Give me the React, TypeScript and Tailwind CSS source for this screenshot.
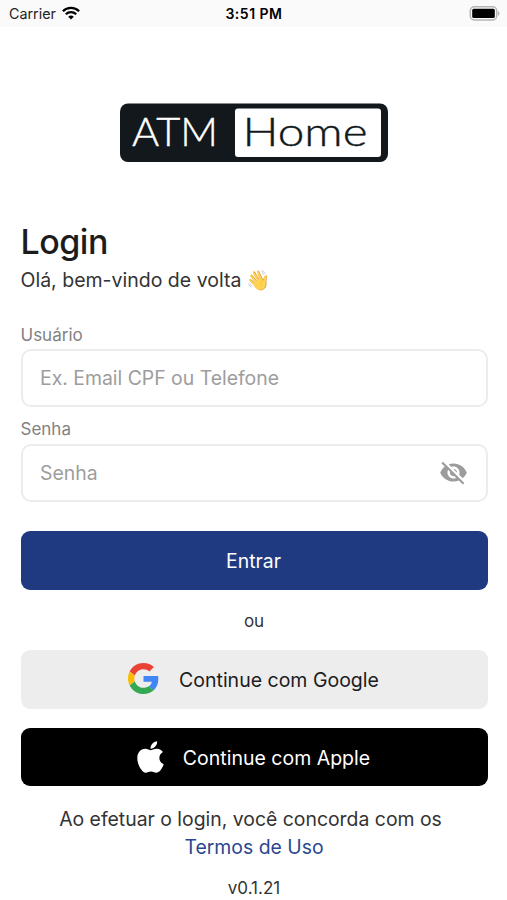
import { FaApple } from "react-icons/fa";
import { MdVisibilityOff } from "react-icons/md";

function StatusBar() {
    return (
        <div className="grid grid-cols-3 items-center h-[27px] pl-[9px] pr-[7px] bg-[#fafafa] text-black">
            <div className="flex items-center gap-[6px]">
                <span className="text-[14.3px] leading-[27px] text-[#222]">Carrier</span>
                <svg className="-mt-px" width="18" height="14" viewBox="0 0 18 14" fill="none" stroke="black" strokeWidth="2.3">
                    <path d="M0.9 5.2a11.5 11.5 0 0 1 16.2 0" />
                    <path d="M3.8 8.3a7.4 7.4 0 0 1 10.4 0" />
                    <path d="M9 13.6 6.2 10.8a4 4 0 0 1 5.6 0Z" fill="black" stroke="none" />
                </svg>
            </div>
            <span className="pr-px text-center text-[14px] leading-[27px] tracking-[0.5px] font-semibold">3:51 PM</span>
            <svg className="justify-self-end" width="31" height="15" viewBox="0 0 31 15">
                <rect x="1.3" y="0.8" width="26.4" height="13.2" rx="4" fill="#fafafa" stroke="#b5b5b5" strokeWidth="1.5" />
                <rect x="3.2" y="2.8" width="22.6" height="9.2" rx="1.5" fill="black" />
                <path d="M28.9 5v5q1.6-.8 1.6-2.5T28.9 5Z" fill="#b5b5b5" />
            </svg>
        </div>
    );
}

function Logo() {
    return (
        <svg className="mx-auto mt-[76px]" width="268" height="59" viewBox="0 0 268 59" fontFamily="Lato, sans-serif" fontWeight="300" fontSize="40">
            <rect y="0.5" width="268" height="58.5" rx="8" fill="#12181b" />
            <rect x="115" y="5.5" width="146" height="48.5" rx="3" fill="white" />
            <text x="12" y="43" fill="white" stroke="white" strokeWidth="0.4" textLength="86" lengthAdjust="spacingAndGlyphs">ATM</text>
            <text x="122.5" y="43" fill="#12181b" stroke="#12181b" strokeWidth="0.4" textLength="125" lengthAdjust="spacingAndGlyphs">Home</text>
        </svg>
    );
}

function GoogleIcon() {
    return (
        <svg className="-mt-[5px]" width="31" height="31" viewBox="0 0 48 48">
            <path fill="#EA4335" d="M24 9.5c3.54 0 6.71 1.22 9.21 3.6l6.85-6.85C35.9 2.38 30.47 0 24 0 14.62 0 6.51 5.38 2.56 13.22l7.98 6.19C12.43 13.72 17.74 9.5 24 9.5z" />
            <path fill="#4285F4" d="M46.98 24.55c0-1.57-.15-3.09-.38-4.55H24v9.02h12.94c-.58 2.96-2.26 5.48-4.78 7.18l7.73 6c4.51-4.18 7.09-10.36 7.09-17.65z" />
            <path fill="#FBBC05" d="M10.53 28.59c-.48-1.45-.76-2.99-.76-4.59s.27-3.14.76-4.59l-7.98-6.19C.92 16.46 0 20.12 0 24c0 3.88.92 7.54 2.56 10.78l7.97-6.19z" />
            <path fill="#34A853" d="M24 48c6.48 0 11.93-2.13 15.89-5.81l-7.73-6c-2.15 1.45-4.92 2.3-8.16 2.3-6.26 0-11.57-4.22-13.47-9.91l-7.98 6.19C6.51 42.62 14.62 48 24 48z" />
        </svg>
    );
}

export default function App() {
    return (
        <div className="h-[900px] overflow-hidden bg-white font-['Inter',sans-serif] text-[#333]">
            <StatusBar />
            <Logo />

            <main className="flex flex-col pl-[20.5px] pr-[19.5px]">
                <h1 className="mt-[59px] text-[34px] leading-[42px] tracking-[-0.5px] font-medium text-[#1c1c1c]">Login</h1>
                <p className="mt-[3px] text-[19.5px] leading-[28px]">
                    Olá, bem-vindo de volta <span className="-ml-px opacity-80">👋</span>
                </p>

                <label className="mt-[30px] text-[17px] leading-[22px] text-[#828282]">Usuário</label>
                <div className="mt-[3px] flex items-center h-[58px] px-[17.5px] rounded-[10px] border-2 border-[#ececec]">
                    <span className="pt-[2px] text-[19.4px] text-[#9d9d9d]">Ex. Email CPF ou Telefone</span>
                </div>

                <label className="mt-[10.5px] text-[17px] leading-[22px] text-[#828282]">Senha</label>
                <div className="mt-[4.5px] flex items-center justify-between h-[58px] px-[17.5px] rounded-[10px] border-2 border-[#ececec]">
                    <span className="pt-px text-[19.4px] text-[#9d9d9d]">Senha</span>
                    <MdVisibilityOff size={29} color="#9c9c9c" className="-mt-px" />
                </div>

                <button className="mt-[29px] pt-[3px] pr-px h-[59px] rounded-[9px] bg-[#203a82] text-[19.4px] text-white">Entrar</button>

                <p className="mt-[20px] text-center text-[17px] leading-[22px]">ou</p>

                <button className="mt-[18px] pt-[3px] pr-px flex items-center justify-center gap-5 h-[58.5px] rounded-[9px] bg-[#ededee] text-[19.5px] text-[#1c1c1c]">
                    <GoogleIcon />
                    Continue com Google
                </button>
                <button className="mt-[19px] pt-[3px] pr-px flex items-center justify-center gap-[19px] h-[58.5px] rounded-[9px] bg-black text-[19.5px] text-white">
                    <FaApple size={36} className="w-[27px] -mt-[3px]" />
                    Continue com Apple
                </button>

                <p className="mt-[18.5px] text-center text-[19.4px] leading-[28px]">
                    <span className="pr-[7px]">Ao efetuar o login, você concorda com os</span>
                    <br />
                    <a className="text-[#2b478f]">Termos de Uso</a>
                </p>
                <p className="mt-[16px] text-center text-[17px] leading-[22px]">v0.1.21</p>
            </main>
        </div>
    );
}
